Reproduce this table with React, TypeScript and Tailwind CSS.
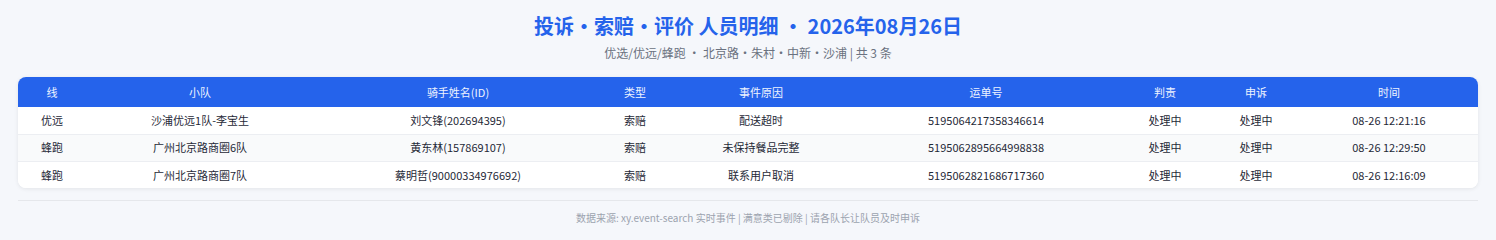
import React from "react";

const rows = [
  ["优远", "沙浦优远1队-李宝生", "刘文锋(202694395)", "索赔", "配送超时", "5195064217358346614", "处理中", "处理中", "08-26 12:21:16"],
  ["蜂跑", "广州北京路商圈6队", "黄东林(157869107)", "索赔", "未保持餐品完整", "5195062895664998838", "处理中", "处理中", "08-26 12:29:50"],
  ["蜂跑", "广州北京路商圈7队", "蔡明哲(90000334976692)", "索赔", "联系用户取消", "5195062821686717360", "处理中", "处理中", "08-26 12:16:09"],
];
const headers = ["线", "小队", "骑手姓名(ID)", "类型", "事件原因", "运单号", "判责", "申诉", "时间"];
const widths = ["w-[68px]", "w-[228px]", "w-[288px]", "w-[66px]", "w-[186px]", "w-[264px]", "w-[94px]", "w-[88px]", "w-[178px]"];

export default function App() {
  return (
    <div className="min-h-[240px] bg-[#f5f7fb] px-[18px] pt-[12px] font-['Noto_Sans_CJK_SC','Noto_Sans',sans-serif]">
      <h1 className="text-center text-[20px] leading-[28px] font-bold text-[#2563eb]">
        投诉·索赔·评价 人员明细 · 2026年08月26日
      </h1>
      <div className="mt-[4px] text-center text-[12px] leading-[18px] text-[#6b7280]">
        优选/优远/蜂跑 · 北京路·朱村·中新·沙浦 | 共 3 条
      </div>
      <div className="mt-[15px] overflow-hidden rounded-[8px] bg-white shadow-[0_1px_4px_rgba(0,0,0,0.08)]">
        <table className="w-full table-fixed border-collapse text-[11px]">
          <thead>
            <tr className="bg-[#2563eb] text-[#eef3ff]">
              {headers.map((h, i) => (
                <th key={i} className={`${widths[i]} h-[30px] text-center font-normal`}>
                  {h}
                </th>
              ))}
            </tr>
          </thead>
          <tbody>
            {rows.map((r, ri) => (
              <tr
                key={ri}
                className={`${ri % 2 === 1 ? "bg-[#f9fafb]" : "bg-white"} ${ri < rows.length - 1 ? "border-b border-[#eceef2]" : ""} text-[#1f2937]`}
              >
                {r.map((c, ci) => (
                  <td key={ci} className="h-[27px] text-center">
                    {c}
                  </td>
                ))}
              </tr>
            ))}
          </tbody>
        </table>
      </div>
      <div className="mt-[12px] border-t border-[#e5e7eb] pt-[9px] text-center text-[10px] leading-[15px] text-[#9ca3af]">
        数据来源: xy.event-search 实时事件 | 满意类已剔除 | 请各队长让队员及时申诉
      </div>
    </div>
  );
}
